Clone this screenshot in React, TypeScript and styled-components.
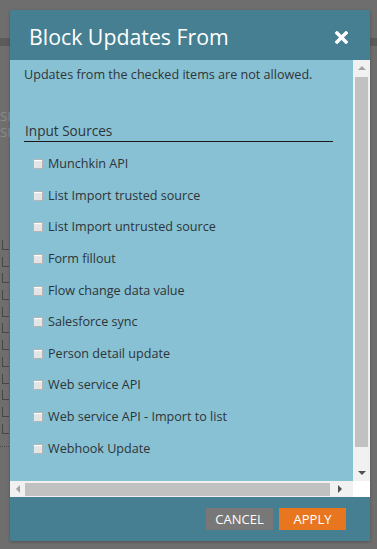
import React from 'react'
import styled, { createGlobalStyle } from 'styled-components'

const sources = [
	'Munchkin API',
	'List Import trusted source',
	'List Import untrusted source',
	'Form fillout',
	'Flow change data value',
	'Salesforce sync',
	'Person detail update',
	'Web service API',
	'Web service API - Import to list',
	'Webhook Update',
]

const GlobalStyle = createGlobalStyle`
	html, body {
		margin: 0;
		padding: 0;
		background: #6e6e6e;
		overflow: hidden;
	}
	body {
		font-family: 'Open Sans', 'Noto Sans', sans-serif;
	}
`

const Page = styled.div`
	position: relative;
	width: 377px;
	height: 549px;
	overflow: hidden;
	background: #6e6e6e;
`

const Band = styled.div`
	margin-top: 38px;
	height: 8px;
	background: #5b5b5b;
`

const Ghost = styled.div`
	padding: 62px 0 0 0;
	display: flex;
	flex-direction: column;
	font-size: 13px;
	line-height: 16px;
	color: #8c8c8c;
	width: 10px;
	overflow: hidden;
`

const Elbow = styled.div`
	width: 6px;
	height: 9px;
	margin: 0 0 6.7px 2px;
	border-left: 1px solid #474747;
	border-bottom: 1px solid #474747;
`

const Elbows = styled.div`
	margin-top: 100px;
	display: flex;
	flex-direction: column;
`

const Dots = styled.div`
	width: 9px;
	margin-top: 6px;
	border-top: 1px dotted #4a4a4a;
`

const Modal = styled.div`
	position: absolute;
	top: 10px;
	left: 10px;
	width: 360px;
	display: flex;
	flex-direction: column;
	box-shadow: 0 1px 3px rgba(0, 0, 0, 0.25);
`

const Header = styled.div`
	height: 50px;
	background: #457f91;
	display: flex;
	align-items: center;
	justify-content: space-between;
	padding: 2px 22px 0 19px;
	box-sizing: border-box;
`

const Title = styled.h1`
	margin: 0;
	font-size: 21.3px;
	font-weight: 400;
	color: #ffffff;
`

const Close = styled.svg`
	width: 13px;
	height: 13px;
	margin-top: 2px;
`

const Body = styled.div`
	display: flex;
	height: 421px;
`

const Content = styled.div`
	flex: 1;
	background: #88c1d3;
	padding: 6px 20px 0 14px;
	overflow: hidden;
	color: #2e3438;
`

const Note = styled.p`
	margin: 0;
	font-size: 12.6px;
	line-height: 18px;
`

const Section = styled.h2`
	margin: 37px 0 0 0;
	padding-left: 1px;
	font-size: 13.6px;
	font-weight: 400;
	line-height: 20px;
	border-bottom: 1px solid #1a1a1a;
`

const List = styled.ul`
	list-style: none;
	margin: 6px 0 0 0;
	padding: 0 0 0 9px;
`

const Item = styled.li`
	height: 31.6px;
	display: flex;
	align-items: center;
	gap: 5px;
	font-size: 12.6px;
`

const Box = styled.span`
	width: 10px;
	height: 10px;
	box-sizing: border-box;
	background: #e4e4e4;
	border: 1px solid #b5b5b5;
	border-radius: 1px;
	box-shadow: inset 0 1px 1px #fff;
	margin-top: 1px;
`

const VTrack = styled.div`
	width: 17px;
	background: #f1f1f1;
	display: flex;
	flex-direction: column;
	align-items: center;
`

const VThumb = styled.div`
	width: 13px;
	height: 370px;
	background: #c1c1c1;
`

const Arrow = styled.div<{ $dir: 'up' | 'down' | 'left' | 'right'; $dark?: boolean }>`
	width: 0;
	height: 0;
	flex: none;
	${({ $dir, $dark }) => {
		const c = $dark ? '#505050' : '#a3a3a3'
		if ($dir === 'up') return `border-left: 4px solid transparent; border-right: 4px solid transparent; border-bottom: 4px solid ${c}; margin: 6px 0 7px;`
		if ($dir === 'down') return `border-left: 4px solid transparent; border-right: 4px solid transparent; border-top: 4px solid ${c}; margin: 24px 0 0;`
		if ($dir === 'left') return `border-top: 4px solid transparent; border-bottom: 4px solid transparent; border-right: 4px solid ${c}; margin: 0 5px 0 6px;`
		return `border-top: 4px solid transparent; border-bottom: 4px solid transparent; border-left: 4px solid ${c}; margin: 0 0 0 8px;`
	}}
`

const HRow = styled.div`
	display: flex;
	height: 16px;
	background: #ffffff;
`

const HTrack = styled.div`
	width: 343px;
	background: #f1f1f1;
	display: flex;
	align-items: center;
`

const HThumb = styled.div`
	width: 305px;
	height: 13px;
	background: #c1c1c1;
`

const Footer = styled.div`
	height: 44px;
	background: #457f91;
	display: flex;
	align-items: center;
	justify-content: flex-end;
	gap: 6px;
	padding-right: 24px;
`

const Button = styled.button<{ $primary?: boolean }>`
	width: 67px;
	height: 22px;
	border: none;
	padding: 0;
	font-family: 'Open Sans', 'Noto Sans', sans-serif;
	font-size: 13px;
	color: #ffffff;
	background: ${({ $primary }) => ($primary ? '#e8761f' : '#787878')};
	cursor: pointer;
`

export default function App() {
	return (
		<Page>
			<GlobalStyle />
			<Band />
			<Ghost>
				<span>SF</span>
				<span>SF</span>
			</Ghost>
			<Elbows>
				{Array.from({ length: 12 }).map((_, i) => (
					<Elbow key={i} />
				))}
				<Dots />
			</Elbows>
			<Modal>
				<Header>
					<Title>Block Updates From</Title>
					<Close viewBox="0 0 13 13">
						<path
							d="M2 2 L11 11 M11 2 L2 11"
							stroke="#ffffff"
							strokeWidth="3.4"
							strokeLinecap="square"
						/>
					</Close>
				</Header>
				<Body>
					<Content>
						<Note>Updates from the checked items are not allowed.</Note>
						<Section>Input Sources</Section>
						<List>
							{sources.map((s) => (
								<Item key={s}>
									<Box />
									{s}
								</Item>
							))}
						</List>
					</Content>
					<VTrack>
						<Arrow $dir="up" />
						<VThumb />
						<Arrow $dir="down" $dark />
					</VTrack>
				</Body>
				<HRow>
					<HTrack>
						<Arrow $dir="left" />
						<HThumb />
						<Arrow $dir="right" $dark />
					</HTrack>
				</HRow>
				<Footer>
					<Button>CANCEL</Button>
					<Button $primary>APPLY</Button>
				</Footer>
			</Modal>
		</Page>
	)
}
